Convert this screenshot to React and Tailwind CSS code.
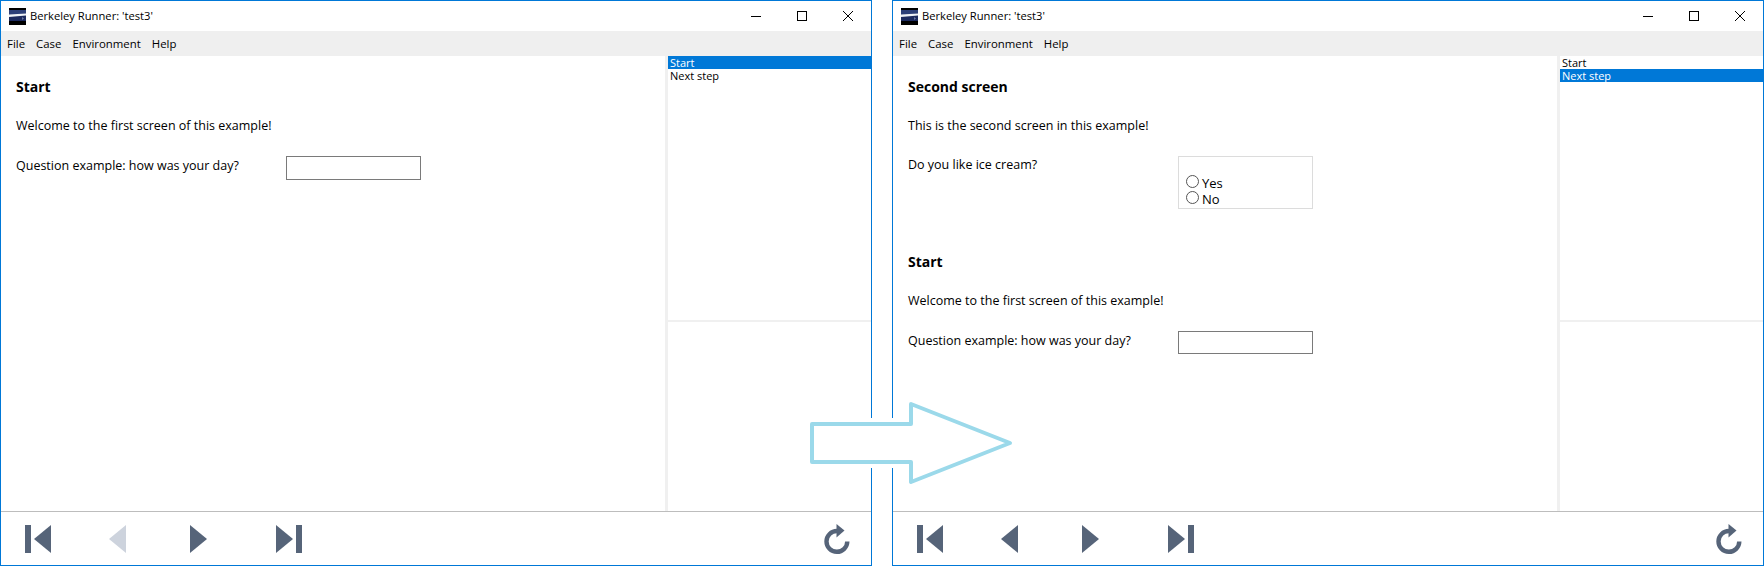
function Logo() {
  return (
    <svg width="17" height="17" viewBox="0 0 17 17" className="shrink-0">
      <rect width="17" height="17" fill="#000" />
      <rect y="2" width="17" height="11" fill="#1c2a5e" />
      <path d="M0 2H17V5.5L0 6.5Z" fill="#2c3f78" />
      <path d="M0 6.5L17 5.5V7.5L0 9Z" fill="#eef1f6" />
      <path d="M13 9L15 10.5L13 12Z" fill="#6c7aa6" />
    </svg>
  );
}

function WinButtons() {
  return (
    <div className="ml-auto flex h-full">
      <div className="flex h-full w-[46px] items-center justify-center">
        <svg width="10" height="10" viewBox="0 0 10 10"><path d="M0 5.5H10" stroke="#000" strokeWidth="1" /></svg>
      </div>
      <div className="flex h-full w-[46px] items-center justify-center">
        <svg width="10" height="10" viewBox="0 0 10 10"><rect x="0.5" y="0.5" width="9" height="9" fill="none" stroke="#000" strokeWidth="1" /></svg>
      </div>
      <div className="flex h-full w-[46px] items-center justify-center">
        <svg width="10" height="10" viewBox="0 0 10 10"><path d="M0 0L10 10M10 0L0 10" stroke="#000" strokeWidth="1" /></svg>
      </div>
    </div>
  );
}

function Heading({ children, className = "" }) {
  return <h2 className={"pl-[15px] text-[14px] leading-[20px] font-bold text-black " + className}>{children}</h2>;
}

function Para({ children, className = "" }) {
  return <p className={"pl-[15px] text-[12.5px] leading-[18px] text-black " + className}>{children}</p>;
}

function QuestionInput({ className = "", inputClass = "" }) {
  return (
    <div className={"flex pl-[15px] text-[12.5px] leading-[18px] text-black " + className}>
      <span className="w-[270px]">Question example: how was your day?</span>
      <input readOnly className={"w-[135px] border border-[#7a7a7a] bg-white " + inputClass} />
    </div>
  );
}

function Radio({ label }) {
  return (
    <label className="flex h-[16px] items-start text-[13px] leading-[16px] text-black">
      <input type="radio" readOnly className="mr-[3px] h-[13px] w-[13px] appearance-none rounded-full border border-[#555] bg-white" />
      <span>{label}</span>
    </label>
  );
}

function Footer({ prevDisabled }) {
  const c = "#566479";
  return (
    <footer className="flex h-[54px] items-start border-t border-[#bdbdbd] bg-white pt-[13px]">
      <svg width="26" height="28" viewBox="0 0 26 28" className="ml-[24px]" fill={c}>
        <rect x="0" y="0" width="6" height="28" />
        <path d="M9 14L26 0V28Z" />
      </svg>
      <svg width="17" height="28" viewBox="0 0 17 28" className="ml-[58px]" fill={prevDisabled ? "#cdd3dd" : c}>
        <path d="M0 14L17 0V28Z" />
      </svg>
      <svg width="17" height="28" viewBox="0 0 17 28" className="ml-[64px]" fill={c}>
        <path d="M17 14L0 0V28Z" />
      </svg>
      <svg width="26" height="28" viewBox="0 0 26 28" className="ml-[69px]" fill={c}>
        <path d="M17 14L0 0V28Z" />
        <rect x="20" y="0" width="6" height="28" />
      </svg>
      <svg width="26" height="30" viewBox="0 0 26 30" className="mr-[21px] ml-auto -mt-[1px]" fill="none">
        <path d="M23.3 17.5A10.4 10.4 0 1 1 13 7" stroke={c} strokeWidth="4.4" />
        <path d="M12.5 0L20.5 6.5L12.5 13.5Z" fill={c} />
      </svg>
    </footer>
  );
}

function Sidebar({ active }) {
  const items = ["Start", "Next step"];
  return (
    <aside className="flex w-[206px] shrink-0 flex-col border-l-[3px] border-[#f0f0f0]">
      <ul className="h-[266px] border-b-2 border-[#f0f0f0] text-[11px] leading-[13px]">
        {items.map((t, i) => (
          <li key={t} className={"h-[13px] pl-[2px] " + (i === active ? "bg-[#0078d7] text-white" : "text-black")}>{t}</li>
        ))}
      </ul>
      <div className="flex-1" />
    </aside>
  );
}

function Window({ active, prevDisabled, children }) {
  return (
    <section className="flex h-[566px] w-[872px] shrink-0 flex-col border border-[#0078d7] bg-white">
      <header className="flex h-[30px] shrink-0 items-center bg-white pl-[8px]">
        <Logo />
        <span className="ml-[4px] text-[11.2px] text-black">Berkeley Runner: 'test3'</span>
        <WinButtons />
      </header>
      <nav className="flex h-[25px] shrink-0 items-center gap-[11px] bg-[#efefef] pt-[1px] pl-[6px] text-[11.4px] text-black">
        <span>File</span>
        <span>Case</span>
        <span>Environment</span>
        <span>Help</span>
      </nav>
      <div className="flex min-h-0 flex-1">
        <main className="min-w-0 flex-1 pt-[21px]">{children}</main>
        <Sidebar active={active} />
      </div>
      <Footer prevDisabled={prevDisabled} />
    </section>
  );
}

export default function App() {
  return (
    <div className="relative flex h-[566px] w-[1764px] gap-[20px] overflow-hidden bg-white font-['Open_Sans',sans-serif]">
      <Window active={0} prevDisabled>
        <Heading>Start</Heading>
        <Para className="mt-[20px]">Welcome to the first screen of this example!</Para>
        <QuestionInput className="mt-[22px]" inputClass="-mt-[1px] h-[24px]" />
      </Window>
      <Window active={1}>
        <Heading>Second screen</Heading>
        <Para className="mt-[20px]">This is the second screen in this example!</Para>
        <div className="mt-[21px] flex pl-[15px] text-[12.5px] leading-[18px] text-black">
          <span className="w-[270px]">Do you like ice cream?</span>
          <div className="h-[53px] w-[135px] border border-[#dcdcdc] pt-[18px] pl-[7px]">
            <Radio label="Yes" />
            <Radio label="No" />
          </div>
        </div>
        <Heading className="mt-[43px]">Start</Heading>
        <Para className="mt-[20px]">Welcome to the first screen of this example!</Para>
        <QuestionInput className="mt-[22px]" inputClass="-mt-[1px] h-[23px]" />
      </Window>
      <svg width="220" height="100" viewBox="0 0 220 100" className="absolute top-[393px] left-[800px]" fill="none">
        <path d="M12 31H111V11L210 50L111 89V69H12Z" fill="#fff" stroke="#fff" strokeWidth="12" strokeLinejoin="round" />
        <path d="M12 31H111V11L210 50L111 89V69H12Z" fill="#fff" stroke="#9bd9ea" strokeWidth="4" strokeLinejoin="round" />
      </svg>
    </div>
  );
}
